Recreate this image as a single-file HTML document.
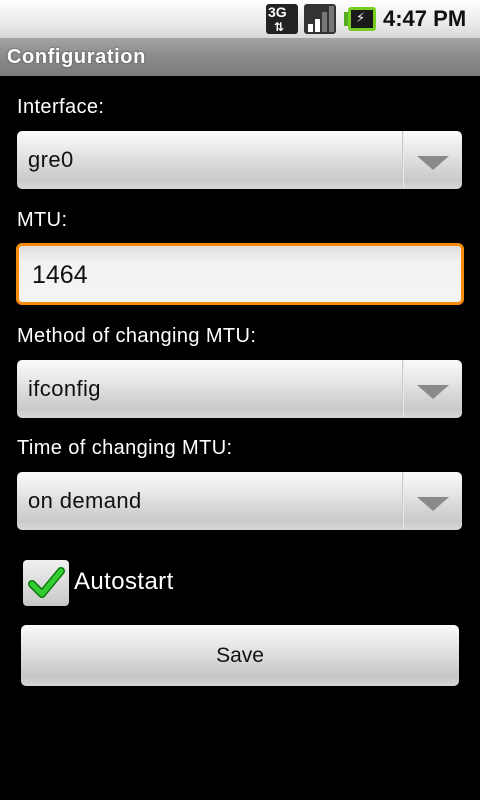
<!DOCTYPE html>
<html><head><meta charset="utf-8"><style>
*{margin:0;padding:0;box-sizing:border-box}
body{width:480px;height:800px;background:#000;font-family:"Liberation Sans","DejaVu Sans",sans-serif;position:relative;overflow:hidden}
.abs{position:absolute}
.status{left:0;top:0;width:480px;height:38px;background:linear-gradient(#fff,#e6e6e6 70%,#d8d8d8)}
.title{left:0;top:38px;width:480px;height:38px;background:linear-gradient(#a4a4a4,#8a8a8a 50%,#7c7c7c);color:#fff;font-weight:bold;font-size:20px;letter-spacing:0.6px;line-height:38px;padding-left:7px;text-shadow:0 0 2px #444}
.lbl{color:#fff;font-size:20px;letter-spacing:0.4px;left:17px}
.sp{left:17px;width:445px;height:58px;border-radius:5px;background:linear-gradient(#fbfbfb,#e4e4e4 40%,#c9c9c9 85%,#d8d8d8);color:#111;font-size:22px;letter-spacing:0.4px;line-height:58px;padding-left:11px}
.sp .div{position:absolute;left:385px;top:0;width:2px;height:58px;background:linear-gradient(90deg,#bbb,#fafafa)}
.sp .ar{position:absolute;left:400px;top:25px;width:0;height:0;border-left:16px solid transparent;border-right:16px solid transparent;border-top:14px solid #8a8a8a}
</style></head><body>
<div class="abs status"></div>
<div class="abs" style="left:266px;top:4px;width:32px;height:30px;background:#222;border-radius:3px;color:#fff;font-weight:bold;font-size:14px;line-height:14px;padding:1px 2px">3G<br><span style="font-size:12px;margin-left:6px">⇅</span></div>
<div class="abs" style="left:304px;top:4px;width:32px;height:30px;background:#333;border-radius:3px"></div>
<div class="abs" style="left:308px;top:24px;width:5px;height:8px;background:#fff"></div>
<div class="abs" style="left:315px;top:19px;width:5px;height:13px;background:#fff"></div>
<div class="abs" style="left:322px;top:12px;width:5px;height:20px;background:#777"></div>
<div class="abs" style="left:329px;top:6px;width:5px;height:26px;background:#777"></div>
<div class="abs" style="left:344px;top:12px;width:4px;height:14px;background:#5a2"></div>
<div class="abs" style="left:348px;top:7px;width:28px;height:24px;background:#1a1a1a;border-radius:3px;border:3px solid #7c2"></div>
<div class="abs" style="left:356px;top:10px;color:#fff;font-size:13px;font-weight:bold">⚡</div>
<div class="abs" style="left:383px;top:6px;font-weight:bold;font-size:22px;color:#111">4:47 PM</div>
<div class="abs title">Configuration</div>

<div class="abs lbl" style="top:96px">Interface:</div>
<div class="abs sp" style="top:131px">gre0<div class="div"></div><div class="ar"></div></div>
<div class="abs lbl" style="top:209px">MTU:</div>
<div class="abs" style="left:16px;top:243px;width:448px;height:62px;border:3px solid #f78a0c;border-radius:6px;background:linear-gradient(#dedede,#f2f2f2 30%,#f4f4f4);font-size:25px;line-height:58px;padding-left:13px;color:#111">1464</div>
<div class="abs lbl" style="top:325px">Method of changing MTU:</div>
<div class="abs sp" style="top:360px">ifconfig<div class="div"></div><div class="ar"></div></div>
<div class="abs lbl" style="top:437px">Time of changing MTU:</div>
<div class="abs sp" style="top:472px">on demand<div class="div"></div><div class="ar"></div></div>

<div class="abs" style="left:23px;top:560px;width:46px;height:46px;border-radius:4px;background:linear-gradient(#f0f0f0,#c8c8c8)"></div>
<svg class="abs" style="left:28px;top:566px" width="38" height="34"><path d="M4 18 L14 28 L33 5" stroke="#0a7a0a" stroke-width="8" fill="none" stroke-linecap="round" stroke-linejoin="round"/><path d="M4 18 L14 28 L33 5" stroke="#3c3" stroke-width="5" fill="none" stroke-linecap="round" stroke-linejoin="round"/></svg>
<div class="abs" style="left:74px;top:568px;color:#fff;font-size:24px;letter-spacing:0.4px">Autostart</div>

<div class="abs" style="left:21px;top:625px;width:438px;height:61px;border-radius:5px;background:linear-gradient(#fbfbfb,#e2e2e2 40%,#c6c6c6 85%,#d6d6d6);color:#111;font-size:21px;line-height:62px;text-align:center">Save</div>
</body></html>
